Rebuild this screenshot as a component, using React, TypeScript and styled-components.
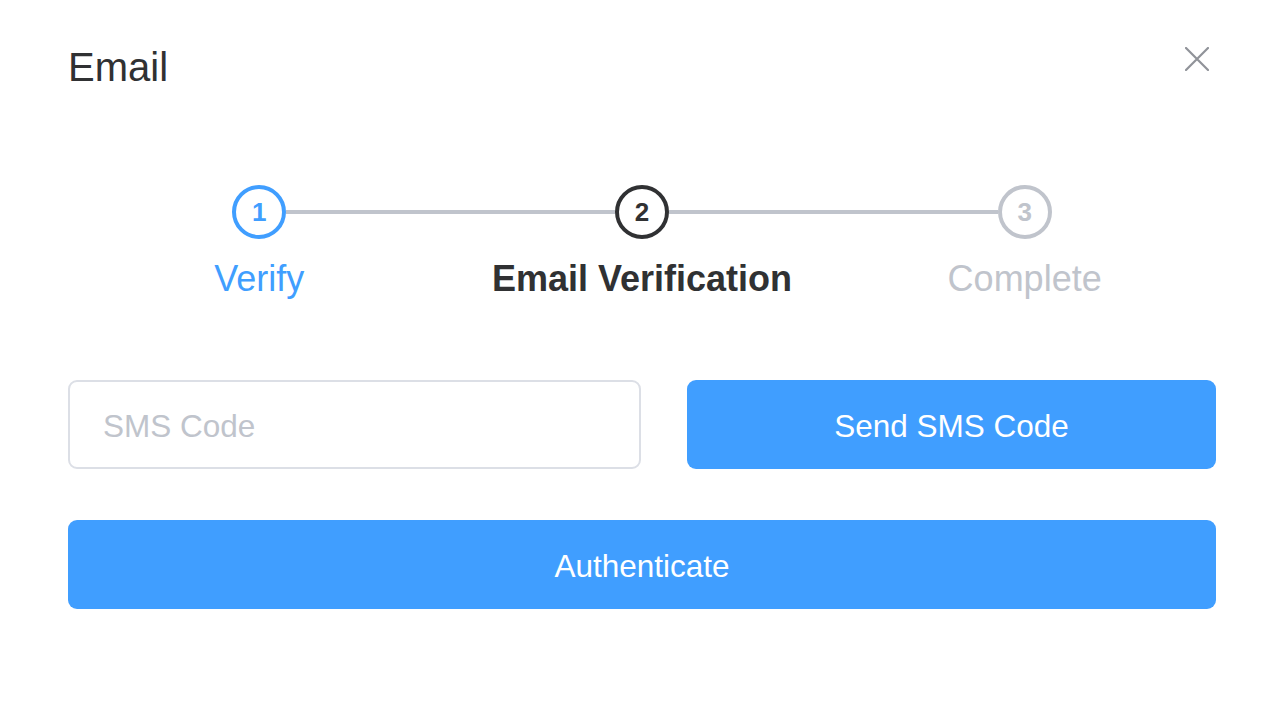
import React from 'react'
import styled, { createGlobalStyle } from 'styled-components'

const palette = {
	primary: '#409eff',
	text: '#303133',
	muted: '#c0c4cc',
	close: '#909399',
	border: '#dcdfe6',
}

type StepState = 'finish' | 'process' | 'wait'

const stepColor = (state: StepState) =>
	state === 'finish' ? palette.primary : state === 'process' ? palette.text : palette.muted

const steps: { title: string; state: StepState }[] = [
	{ title: 'Verify', state: 'finish' },
	{ title: 'Email Verification', state: 'process' },
	{ title: 'Complete', state: 'wait' },
]

export default function App() {
	return (
		<>
			<GlobalStyle />
			<Dialog>
				<Header>
					<Title>Email</Title>
					<CloseButton aria-label="Close">
						<svg width="24" height="24" viewBox="0 0 24 24">
							<path
								d="M1 1 L23 23 M23 1 L1 23"
								stroke={palette.close}
								strokeWidth="2.2"
								strokeLinecap="round"
							/>
						</svg>
					</CloseButton>
				</Header>
				<Steps>
					{steps.map((step, i) => (
						<Step key={step.title}>
							<StepHead>
								<StepLine $hidden={i === 0} />
								<StepIcon $state={step.state}>{i + 1}</StepIcon>
								<StepLine $hidden={i === steps.length - 1} />
							</StepHead>
							<StepTitle $state={step.state}>{step.title}</StepTitle>
						</Step>
					))}
				</Steps>
				<CodeRow>
					<CodeInput placeholder="SMS Code" />
					<PrimaryButton>Send SMS Code</PrimaryButton>
				</CodeRow>
				<SubmitRow>
					<PrimaryButton>Authenticate</PrimaryButton>
				</SubmitRow>
			</Dialog>
		</>
	)
}

const GlobalStyle = createGlobalStyle`
	html, body {
		margin: 0;
		padding: 0;
		background: #fff;
	}
	body {
		font-family: 'Liberation Sans', Arial, Helvetica, sans-serif;
	}
`

const Dialog = styled.div`
	width: 1280px;
	height: 720px;
	box-sizing: border-box;
	padding: 40px 64px 0 68px;
	background: #fff;
	display: flex;
	flex-direction: column;
`

const Header = styled.div`
	display: flex;
	justify-content: space-between;
	align-items: flex-start;
`

const Title = styled.div`
	font-size: 40px;
	line-height: 54px;
	color: ${palette.text};
`

const CloseButton = styled.button`
	display: flex;
	padding: 0;
	margin: 7px 7px 0 0;
	border: none;
	background: transparent;
	cursor: pointer;
`

const Steps = styled.div`
	display: grid;
	grid-template-columns: repeat(3, 1fr);
	margin-top: 91px;
`

const Step = styled.div`
	display: flex;
	flex-direction: column;
	align-items: stretch;
`

const StepHead = styled.div`
	display: flex;
	align-items: center;
	height: 54px;
`

const StepLine = styled.div<{ $hidden: boolean }>`
	flex: 1;
	height: 4.5px;
	background: ${(p) => (p.$hidden ? 'transparent' : palette.muted)};
`

const StepIcon = styled.div<{ $state: StepState }>`
	width: 54px;
	height: 54px;
	box-sizing: border-box;
	border-radius: 50%;
	border: 4.5px solid ${(p) => stepColor(p.$state)};
	color: ${(p) => stepColor(p.$state)};
	display: flex;
	align-items: center;
	justify-content: center;
	font-size: 26px;
	font-weight: 700;
	background: #fff;
`

const StepTitle = styled.div<{ $state: StepState }>`
	margin-top: 13px;
	text-align: center;
	font-size: 36px;
	line-height: 54px;
	color: ${(p) => stepColor(p.$state)};
	font-weight: ${(p) => (p.$state === 'process' ? 700 : 400)};
`

const CodeRow = styled.div`
	display: grid;
	grid-template-columns: 573px 1fr;
	column-gap: 46px;
	margin-top: 74px;
`

const CodeInput = styled.input`
	height: 89px;
	box-sizing: border-box;
	border: 2px solid ${palette.border};
	border-radius: 9px;
	padding: 3px 33px 0;
	font-family: inherit;
	font-size: 31.5px;
	color: ${palette.text};
	outline: none;
	&::placeholder {
		color: ${palette.muted};
	}
`

const PrimaryButton = styled.button`
	height: 89px;
	width: 100%;
	border: none;
	border-radius: 9px;
	padding: 3px 0 0;
	background: ${palette.primary};
	color: #fff;
	font-family: inherit;
	font-size: 31.5px;
	cursor: pointer;
`

const SubmitRow = styled.div`
	display: flex;
	margin-top: 51px;
`
